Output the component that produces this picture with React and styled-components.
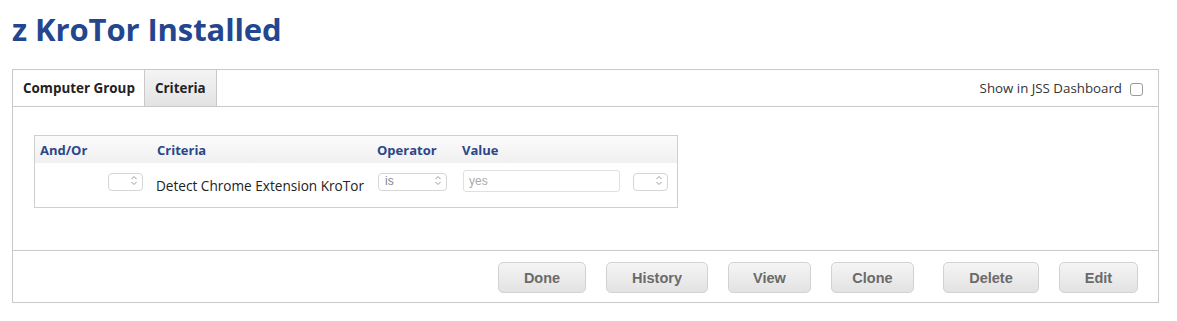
import React from "react";
import styled, { createGlobalStyle } from "styled-components";

const GlobalStyle = createGlobalStyle`
  body {
    margin: 0;
    background: #fff;
    font-family: "Open Sans", "DejaVu Sans", sans-serif;
  }
`;

const Page = styled.div`
  padding: 11px 0 0 12px;
  width: 1147px;
`;

const Title = styled.h1`
  margin: 0 0 22px 0;
  font-size: 31px;
  line-height: 36px;
  font-weight: 700;
  color: #24468e;
  letter-spacing: -0.1px;
`;

const Panel = styled.div`
  border: 1px solid #c9c9c9;
  width: 1145px;
`;

const TabBar = styled.div`
  display: flex;
  align-items: stretch;
  height: 36px;
  border-bottom: 1px solid #c9c9c9;
`;

const Tab = styled.div`
  display: flex;
  align-items: center;
  padding: 0 10px;
  font-size: 13.4px;
  font-weight: 700;
  color: #222;
  background: ${(p) =>
    p.$active ? "#fff" : "linear-gradient(#f4f4f4, #e3e3e3)"};
  border-right: 1px solid #c9c9c9;
  width: ${(p) => p.$w}px;
  box-sizing: border-box;
  white-space: nowrap;
`;

const Spacer = styled.div`
  flex: 1;
`;

const DashToggle = styled.label`
  display: flex;
  align-items: center;
  gap: 8px;
  padding-right: 15px;
  font-size: 13.3px;
  color: #333;
`;

const Check = styled.span`
  width: 11px;
  height: 11px;
  border: 1px solid #9a9a9a;
  border-radius: 3px;
  background: #fff;
  margin-top: 2px;
`;

const Content = styled.div`
  height: 144px;
  padding: 28px 0 0 21px;
  box-sizing: border-box;
  border-bottom: 1px solid #c9c9c9;
`;

const Table = styled.div`
  width: 644px;
  border: 1px solid #cfcfcf;
  box-sizing: border-box;
`;

const Row = styled.div`
  display: grid;
  grid-template-columns: 114px 220px 87px 171px 1fr;
  align-items: center;
  height: ${(p) => p.$h}px;
  background: ${(p) => (p.$head ? "linear-gradient(#fbfbfb, #f0f0f0)" : "#fff")};
`;

const HeadCell = styled.div`
  padding-left: ${(p) => p.$pl || 8}px;
  font-size: 13px;
  font-weight: 700;
  color: #2b4689;
`;

const Cell = styled.div`
  display: flex;
  justify-content: ${(p) => p.$justify || "flex-start"};
  padding-left: ${(p) => p.$pl || 0}px;
  padding-right: ${(p) => p.$pr || 0}px;
  font-size: 13.6px;
  color: #222;
  white-space: nowrap;
`;

const Select = styled.div`
  display: flex;
  align-items: center;
  justify-content: space-between;
  box-sizing: border-box;
  width: ${(p) => p.$w}px;
  height: 18px;
  margin-bottom: 7px;
  padding: 0 4px 2px 6px;
  border: 1px solid #d6d6d6;
  border-radius: 4px;
  background: #fff;
  font-family: "Liberation Sans", sans-serif;
  font-size: 12px;
  color: #888;
`;

const Input = styled.div`
  box-sizing: border-box;
  width: 157px;
  height: 22px;
  margin-bottom: 9px;
  padding: 3px 5px;
  border: 1px solid #e0e0e0;
  border-radius: 3px;
  font-family: "Liberation Sans", sans-serif;
  font-size: 12px;
  color: #aaa;
`;

const Footer = styled.div`
  display: flex;
  justify-content: flex-end;
  align-items: flex-start;
  height: 51px;
  box-sizing: border-box;
  padding: 11px 20px 0 0;
`;

const Button = styled.button`
  width: ${(p) => p.$w}px;
  height: 31px;
  margin-left: ${(p) => p.$ml}px;
  border: 1px solid #d2d2d2;
  border-radius: 5px;
  background: linear-gradient(#f5f5f5, #e2e2e2);
  font-family: "Liberation Sans", Arial, sans-serif;
  font-size: 14.5px;
  font-weight: 700;
  color: #6a6a6a;
  padding: 0;
`;

const Arrows = () => (
  <svg width="8" height="11" viewBox="0 0 8 11" fill="none" stroke="#9a9a9a" strokeWidth="1">
    <path d="M1.5 4 L4 1.5 L6.5 4" />
    <path d="M1.5 7 L4 9.5 L6.5 7" />
  </svg>
);

const buttons = [
  { label: "Done", w: 88, ml: 0 },
  { label: "History", w: 102, ml: 20 },
  { label: "View", w: 83, ml: 20 },
  { label: "Clone", w: 83, ml: 20 },
  { label: "Delete", w: 96, ml: 29 },
  { label: "Edit", w: 79, ml: 20 },
];

export default function App() {
  return (
    <>
      <GlobalStyle />
      <Page>
        <Title>z KroTor Installed</Title>
        <Panel>
          <TabBar>
            <Tab $active $w={132}>Computer Group</Tab>
            <Tab $w={72}>Criteria</Tab>
            <Spacer />
            <DashToggle>
              Show in JSS Dashboard <Check />
            </DashToggle>
          </TabBar>
          <Content>
            <Table>
              <Row $head $h={27}>
                <HeadCell $pl={5}>And/Or</HeadCell>
                <HeadCell>Criteria</HeadCell>
                <HeadCell>Operator</HeadCell>
                <HeadCell $pl={6}>Value</HeadCell>
                <HeadCell />
              </Row>
              <Row $h={44}>
                <Cell $justify="flex-end" $pr={6}>
                  <Select $w={35}>
                    <span />
                    <Arrows />
                  </Select>
                </Cell>
                <Cell $pl={7}>Detect Chrome Extension KroTor</Cell>
                <Cell $pl={9}>
                  <Select $w={69}>
                    <span>is</span>
                    <Arrows />
                  </Select>
                </Cell>
                <Cell $pl={7}>
                  <Input>yes</Input>
                </Cell>
                <Cell $pl={6}>
                  <Select $w={35}>
                    <span />
                    <Arrows />
                  </Select>
                </Cell>
              </Row>
            </Table>
          </Content>
          <Footer>
            {buttons.map((b) => (
              <Button key={b.label} $w={b.w} $ml={b.ml}>
                {b.label}
              </Button>
            ))}
          </Footer>
        </Panel>
      </Page>
    </>
  );
}
